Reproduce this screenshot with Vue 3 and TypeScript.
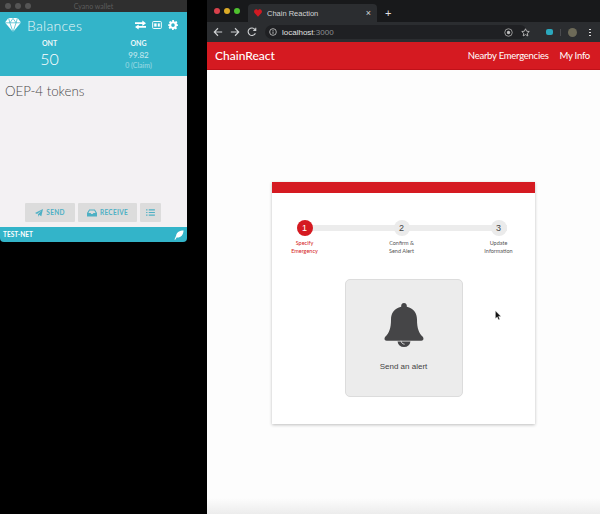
<template>
  <div class="desktop">
    <section class="wallet">
      <div class="wallet-titlebar">
        <div class="traffic muted"><i></i><i></i><i></i></div>
        <span class="wallet-title">Cyano wallet</span>
      </div>
      <header class="wallet-head">
        <div class="wallet-top">
          <svg class="gem" viewBox="0 0 16 14" width="16" height="14">
            <path fill="#fff" d="M3.4 0h9.2L16 4.6 8 14 0 4.6z" />
            <path fill="none" stroke="#33b4c9" stroke-width=".7" d="M0 4.8h16M3.6 0l1.3 4.8L8 14l3.1-9.2L12.4 0M4.9 4.8 8 .4l3.1 4.4" />
          </svg>
          <h1>Balances</h1>
          <div class="wallet-tools">
            <svg viewBox="0 0 12 10" width="11" height="10">
              <path fill="#fff" d="M0 2h8V0l4 3-4 3V4H0zM12 6H4V4.500L0 7.200 4 10V8h8z" />
            </svg>
            <svg viewBox="0 0 12 10" width="10" height="8">
              <rect x=".6" y=".6" width="10.800" height="8.800" rx="1" fill="none" stroke="#fff" stroke-width="1.200" />
              <rect x="2.500" y="3" width="3" height="4" fill="#fff" />
              <rect x="7" y="3" width="2.500" height="4" fill="#fff" />
            </svg>
            <svg viewBox="0 0 24 24" width="10" height="10">
              <path fill="#fff" fill-rule="evenodd" d="M10 0h4l.7 3.300 2.200.9 2.900-1.800 2.800 2.800-1.800 2.900.9 2.200L24 11v3l-3.300.7-.9 2.200 1.800 2.900-2.800 2.800-2.900-1.800-2.200.9L14 24h-4l-.7-3.300-2.200-.9-2.900 1.800-2.800-2.800 1.800-2.900-.9-2.200L0 14v-3l3.300-.7.9-2.200-1.800-2.900 2.800-2.800 2.900 1.800 2.200-.9zM12 8a4.300 4.300 0 1 0 0 8.600A4.300 4.300 0 0 0 12 8z" />
            </svg>
          </div>
        </div>
        <div class="balances">
          <div v-for="coin in coins" :key="coin.name" class="balance">
            <strong>{{ coin.name }}</strong>
            <span :class="coin.big ? 'amount-big' : 'amount'">{{ coin.amount }}</span>
            <small v-if="coin.claim">{{ coin.claim }}</small>
          </div>
        </div>
      </header>
      <main class="wallet-body">
        <h2>OEP-4 tokens</h2>
        <div class="wallet-actions">
          <button class="send">
            <svg viewBox="0 0 12 12" width="8" height="8"><path fill="#4eb0c4" d="M12 0 9.500 11 6 8.500 4.500 12V8L10 2 3 7.500 0 6z" /></svg>
            SEND
          </button>
          <button class="receive">
            <svg viewBox="0 0 14 10" width="10" height="8"><path fill="#4eb0c4" d="M3 0h8l3 5v5H0V5zm.800 1.500L2 5h3l1 1.500h2L9 5h3l-1.800-3.500z" /></svg>
            RECEIVE
          </button>
          <button class="list">
            <svg viewBox="0 0 10 8" width="9" height="7"><path fill="none" stroke="#4eb0c4" stroke-width="1.300" d="M0 1h1.500M3 1h7M0 4h1.500M3 4h7M0 7h1.500M3 7h7" /></svg>
          </button>
        </div>
      </main>
      <footer class="wallet-foot">
        <span>TEST-NET</span>
        <svg viewBox="0 0 12 12" width="10" height="10">
          <path fill="#fff" d="M11.500.5C7 .5 3 2.500 2.500 7L.5 11.500l1 .3L3.200 9C8 9.500 11 6 11.500.5z" />
        </svg>
      </footer>
    </section>

    <section class="browser">
      <div class="tabstrip">
        <div class="traffic"><i class="red"></i><i class="yellow"></i><i class="green"></i></div>
        <div class="tab">
          <svg viewBox="0 0 12 11" width="8" height="8">
            <path fill="#d11a22" d="M6 11 .8 5.600C-1 3 .8 0 3.200 0 4.500 0 5.500.7 6 1.700 6.500.7 7.500 0 8.800 0 11.200 0 13 3 11.200 5.600z" />
          </svg>
          <span>Chain Reaction</span>
          <b>×</b>
        </div>
        <span class="newtab">+</span>
      </div>
      <div class="toolbar">
        <svg class="nav" viewBox="0 0 12 12" width="10" height="10"><path fill="none" stroke="#d0d2d4" stroke-width="1.300" d="M11 6H1.500M6 1.500 1.500 6 6 10.500" /></svg>
        <svg class="nav" viewBox="0 0 12 12" width="10" height="10"><path fill="none" stroke="#d0d2d4" stroke-width="1.300" d="M1 6h9.500M6 1.500 10.500 6 6 10.500" /></svg>
        <svg class="nav" viewBox="0 0 12 12" width="10" height="10"><path fill="none" stroke="#d0d2d4" stroke-width="1.300" d="M10 7.500A4.500 4.500 0 1 1 9.500 3L10.500 4M10.500 1v3h-3" /></svg>
        <div class="address">
          <svg viewBox="0 0 12 12" width="8" height="8"><circle cx="6" cy="6" r="5" fill="none" stroke="#ccc" stroke-width="1.200" /><path stroke="#ccc" stroke-width="1.300" d="M6 5.200v3.600M6 3v1.300" /></svg>
          <span><em>localhost</em>:3000</span>
        </div>
        <div class="toolbar-right">
          <svg viewBox="0 0 12 12" width="9" height="9"><circle cx="6" cy="6" r="5" fill="none" stroke="#bbb" /><circle cx="6" cy="6" r="2.200" fill="#bbb" /></svg>
          <svg viewBox="0 0 12 12" width="9" height="9"><path fill="none" stroke="#c8c8c8" stroke-width="1.100" d="m6 1 1.500 3.300 3.500.4-2.600 2.400.7 3.500L6 8.800 2.900 10.600l.7-3.500L1 4.700l3.500-.4z" /></svg>
          <i class="ext"></i>
          <i class="sep"></i>
          <i class="avatar"></i>
          <i class="dots"></i>
        </div>
      </div>
      <nav class="appbar">
        <span class="brand">ChainReact</span>
        <div class="links"><a>Nearby Emergencies</a><a>My Info</a></div>
      </nav>
      <main class="page">
        <div class="card">
          <div class="card-stripe"></div>
          <ol class="steps">
            <li v-for="(step, i) in steps" :key="step" :class="{ active: i === 0 }">
              <span class="dot">{{ i + 1 }}</span>
              <p v-html="step"></p>
            </li>
          </ol>
          <button class="alert-tile">
            <svg viewBox="0 0 40 44" width="40" height="44">
              <path fill="#454547" d="M20 0c1.700 0 2.800 1.200 2.800 2.800v.9C29.500 5 33 10.200 33 16.500c0 9 2 13.500 5.500 17 1.400 1.400 1.500 4-1.200 4.200H2.700C0 37.500.1 34.900 1.500 33.500 5 30 7 25.500 7 16.500 7 10.200 10.500 5 17.200 3.700v-.9C17.200 1.200 18.300 0 20 0z" />
              <path fill="#454547" d="M13.500 38.500h13A6.600 6.600 0 0 1 20 44a6.600 6.600 0 0 1-6.500-5.500z" />
              <path fill="none" stroke="#d8d8d8" stroke-width="1" d="M17 37.800c.3 2 1.500 3.200 3.600 3.400" />
            </svg>
            <span>Send an alert</span>
          </button>
        </div>
        <svg class="cursor" viewBox="0 0 9 13" width="7" height="11">
          <path fill="#111" stroke="#fff" stroke-width=".5" d="M.5.500v10l2.400-2.200 1.500 3.700 1.800-.8-1.600-3.500h3.200z" />
        </svg>
      </main>
    </section>
  </div>
</template>

<script setup lang="ts">
interface Coin {
  name: string
  amount: string
  big?: boolean
  claim?: string
}

const coins: Coin[] = [
  { name: 'ONT', amount: '50', big: true },
  { name: 'ONG', amount: '99.82', claim: '0 (Claim)' }
]

const steps = ['Specify<br>Emergency', 'Confirm &amp;<br>Send Alert', 'Update<br>Information']
</script>

<style>
html,
body {
  margin: 0;
  background: #000;
}
</style>

<style scoped>
.desktop {
  position: relative;
  width: 600px;
  height: 514px;
  overflow: hidden;
  background: #000;
  font-family: Lato, "Liberation Sans", sans-serif;
}

.wallet,
.browser {
  position: absolute;
  top: 0;
  display: flex;
  flex-direction: column;
}

.wallet {
  left: 0;
  width: 187px;
  height: 242px;
  border-radius: 0 0 4px 4px;
  overflow: hidden;
}

.wallet-titlebar {
  height: 12px;
  display: flex;
  align-items: center;
  justify-content: center;
  position: relative;
  background: #2f2f2f;
}

.traffic {
  display: flex;
  gap: 4px;
}

.traffic i {
  width: 6px;
  height: 6px;
  border-radius: 50%;
}

.traffic.muted {
  position: absolute;
  left: 5px;
  top: 3px;
}

.traffic.muted i {
  background: #555;
}

.wallet-title {
  font-size: 7px;
  color: #5c5c5c;
}

.wallet-head {
  height: 64px;
  background: #33b4c9;
  color: #fff;
  box-sizing: border-box;
  padding: 5px 9px 0 5px;
}

.wallet-top {
  display: flex;
  align-items: center;
  gap: 6px;
  height: 16px;
}

.gem {
  flex: none;
}

.wallet-top h1 {
  margin: 0;
  font-size: 14px;
  font-weight: 300;
  letter-spacing: .3px;
  opacity: .9;
}

.wallet-tools {
  margin-left: auto;
  display: flex;
  align-items: center;
  gap: 6px;
}

.balances {
  display: grid;
  grid-template-columns: 89px 89px;
  margin-top: 6px;
}

.balance {
  display: flex;
  flex-direction: column;
  align-items: center;
}

.balance strong {
  font-size: 7px;
  line-height: 9px;
  font-weight: 700;
  opacity: .9;
}

.amount-big {
  font-size: 16px;
  line-height: 19px;
  margin-top: 1px;
  font-weight: 300;
}

.amount {
  font-size: 8px;
  line-height: 11px;
  margin-top: 2px;
  opacity: .75;
}

.balance small {
  font-size: 7px;
  line-height: 9px;
  opacity: .5;
}

.wallet-body {
  flex: 1;
  display: flex;
  flex-direction: column;
  background: #f3f1f3;
  padding: 6px 0 5px;
}

.wallet-body h2 {
  margin: 0 0 0 5px;
  font-size: 13.300px;
  line-height: 18px;
  font-weight: 300;
  color: #4a4a4a;
}

.wallet-actions {
  margin-top: auto;
  padding-left: 25px;
  display: flex;
  gap: 3px;
}

.wallet-actions button {
  height: 19px;
  padding: 0;
  border: 0;
  border-radius: 1px;
  background: #dcdcdc;
  color: #4eb0c4;
  font: 700 6.500px Lato, "Liberation Sans", sans-serif;
  letter-spacing: .3px;
  display: flex;
  align-items: center;
  justify-content: center;
  gap: 3px;
}

.send {
  width: 50px;
}

.receive {
  width: 59px;
}

.list {
  width: 21px;
}

.wallet-foot {
  height: 15px;
  background: #33b4c9;
  color: #fff;
  font-size: 6.500px;
  font-weight: 700;
  display: flex;
  align-items: center;
  justify-content: space-between;
  padding: 0 3px 0 3px;
}

.browser {
  left: 207px;
  width: 393px;
  height: 514px;
  background: #fff;
}

.tabstrip {
  height: 22px;
  display: flex;
  align-items: flex-end;
  background: #18191b;
  box-sizing: border-box;
  padding-left: 7px;
}

.tabstrip .traffic {
  align-self: center;
  gap: 4px;
  margin-right: 8px;
}

.traffic .red {
  background: #d9414c;
}

.traffic .yellow {
  background: #dcab27;
}

.traffic .green {
  background: #4fc22f;
}

.tab {
  width: 129px;
  height: 18px;
  box-sizing: border-box;
  padding: 0 6px 0 6px;
  border-radius: 4px 4px 0 0;
  background: #2b2d30;
  color: #d4d5d6;
  font: 7.500px "Liberation Sans", sans-serif;
  display: flex;
  align-items: center;
  gap: 5px;
}

.tab b {
  margin-left: auto;
  font-size: 9px;
  font-weight: 400;
}

.newtab {
  align-self: center;
  margin: 3px 0 0 8px;
  color: #e2e2e2;
  font: 11px "Liberation Sans", sans-serif;
}

.toolbar {
  height: 20px;
  background: #2b2d30;
  display: flex;
  align-items: center;
  gap: 7px;
  padding: 0 9px 0 6px;
}

.address {
  flex: 1;
  height: 14px;
  margin-left: 1px;
  padding-left: 4px;
  background: #1f2023;
  border-radius: 7px;
  display: flex;
  align-items: center;
  gap: 5px;
  color: #8d8f92;
  font: 8px "Liberation Sans", sans-serif;
}

.address em {
  font-style: normal;
  color: #e0e0e0;
}

.toolbar-right {
  display: flex;
  align-items: center;
  gap: 8px;
  margin-left: -30px;
}

.ext {
  width: 7px;
  height: 6px;
  border-radius: 2px;
  background: #2ba8bd;
  margin-left: 8px;
}

.sep {
  width: 1px;
  height: 7px;
  background: #4a4b4e;
  margin-left: -1px;
  margin-right: -1px;
}

.avatar {
  width: 9px;
  height: 9px;
  border-radius: 50%;
  background: #6d6a58;
  margin-right: 4px;
}

.dots {
  width: 2px;
  height: 8px;
  background: radial-gradient(circle, #ddd 1px, transparent 1.100px) 0 0 / 2px 3px;
}

.appbar {
  height: 28px;
  background: #d51a21;
  border-bottom: 1px solid #c01119;
  display: flex;
  align-items: center;
  justify-content: space-between;
  padding: 0 10px 0 8px;
  color: #fff;
  box-sizing: border-box;
  box-shadow: 0 1px 0 #f0a5a8;
}

.brand {
  font-size: 12px;
  font-weight: 500;
}

.links {
  display: flex;
  gap: 11px;
  font-size: 9.500px;
  letter-spacing: -.25px;
}

.page {
  flex: 1;
  position: relative;
  background: linear-gradient(#fdfdfd calc(100% - 16px), #ececec);
  padding: 112px 65px 0;
}

.card {
  width: 263px;
  height: 242px;
  box-sizing: border-box;
  background: #fff;
  box-shadow: 0 1px 3px rgba(0, 0, 0, .25);
  display: flex;
  flex-direction: column;
  align-items: center;
}

.card-stripe {
  width: 100%;
  height: 11px;
  flex: none;
  background: #d51a21;
}

.steps {
  list-style: none;
  margin: 27px 0 0 -4px;
  padding: 0;
  width: 210px;
  height: 49px;
  display: flex;
  justify-content: space-between;
  background: linear-gradient(#ececec, #ececec) center 5px / 100% 6px no-repeat;
}

.steps li {
  width: 16px;
  display: flex;
  flex-direction: column;
  align-items: center;
}

.dot {
  width: 16px;
  height: 16px;
  flex: none;
  border-radius: 50%;
  background: #ebebeb;
  color: #444;
  font: 9px/16px "Liberation Sans", sans-serif;
  text-align: center;
}

.steps p {
  margin: 3px 0 0;
  white-space: nowrap;
  text-align: center;
  font-size: 5.500px;
  line-height: 8px;
  color: #555;
}

.active .dot {
  background: #d51a21;
  color: #fff;
}

.active p {
  color: #d51a21;
}

.alert-tile {
  width: 118px;
  height: 118px;
  flex: none;
  margin-top: 10px;
  padding: 23px 0 0;
  box-sizing: border-box;
  border: 1px solid #dcdcdc;
  border-radius: 5px;
  background: #ececec;
  display: flex;
  flex-direction: column;
  align-items: center;
  gap: 15px;
  color: #444;
  font: 8px "Liberation Sans", sans-serif;
}

.cursor {
  position: absolute;
  left: 288px;
  top: 240px;
}
</style>
